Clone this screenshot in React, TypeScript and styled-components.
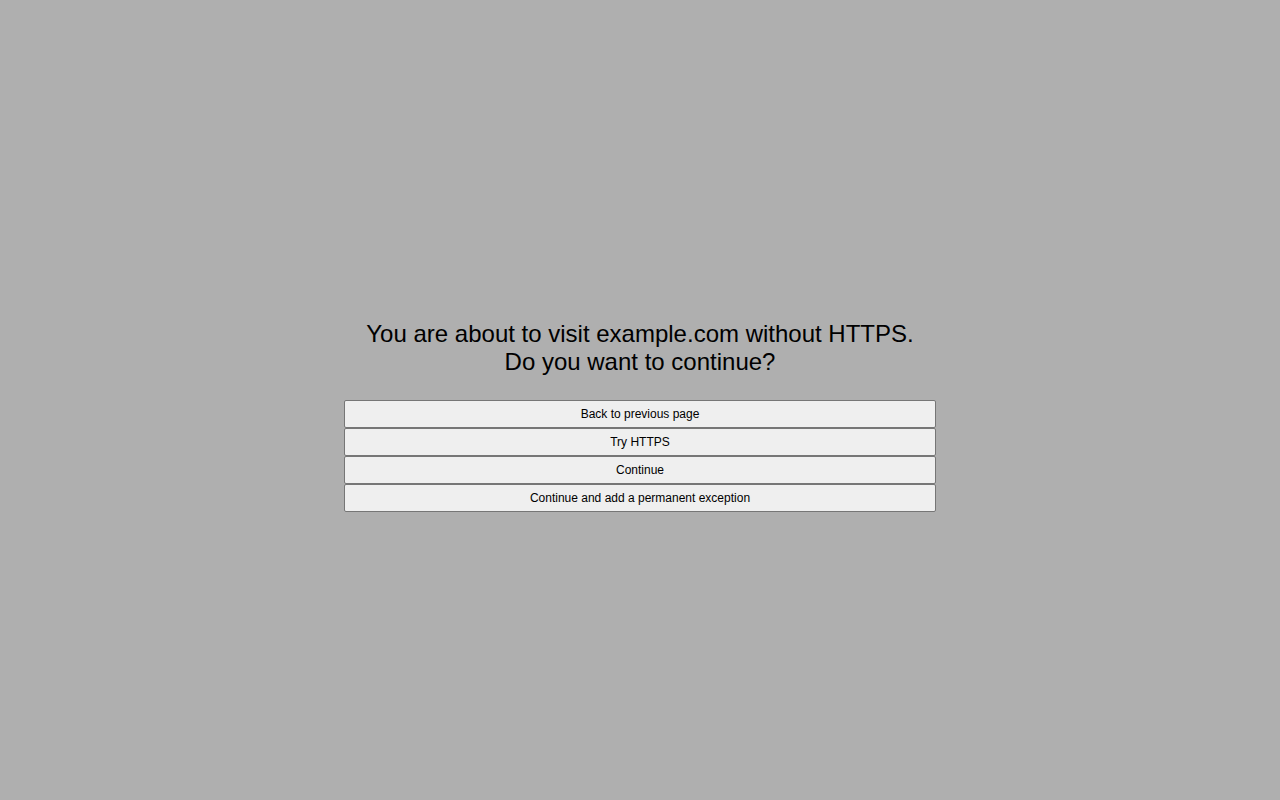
import styled, { createGlobalStyle } from "styled-components";

const GlobalStyle = createGlobalStyle`
  html, body {
    margin: 0;
    padding: 0;
    height: 100%;
    background: #afafaf;
  }
  #root {
    height: 100%;
  }
`;

const Page = styled.div`
  height: 100vh;
  display: flex;
  align-items: center;
  justify-content: center;
  font-family: "Liberation Sans", Arial, sans-serif;
  padding-top: 31px;
  box-sizing: border-box;
`;

const Dialog = styled.div`
  width: 592px;
  display: flex;
  flex-direction: column;
  align-items: stretch;
`;

const Heading = styled.div`
  font-size: 24px;
  line-height: 28px;
  color: #000;
  text-align: center;
  margin-bottom: 24px;
`;

const ButtonList = styled.div`
  display: flex;
  flex-direction: column;
`;

const ChoiceButton = styled.button`
  height: 28px;
  width: 100%;
  margin: 0;
  padding: 0 6px;
  background: #efefef;
  border: 1px solid #767676;
  border-radius: 2px;
  font-family: "Liberation Sans", Arial, sans-serif;
  font-size: 12px;
  color: #000;
  cursor: pointer;
`;

const choices = [
  "Back to previous page",
  "Try HTTPS",
  "Continue",
  "Continue and add a permanent exception",
];

const App = () => {
  return (
    <Page>
      <GlobalStyle />
      <Dialog>
        <Heading>
          You are about to visit example.com without HTTPS.
          <br />
          Do you want to continue?
        </Heading>
        <ButtonList>
          {choices.map((label) => (
            <ChoiceButton key={label}>{label}</ChoiceButton>
          ))}
        </ButtonList>
      </Dialog>
    </Page>
  );
};

export default App;
